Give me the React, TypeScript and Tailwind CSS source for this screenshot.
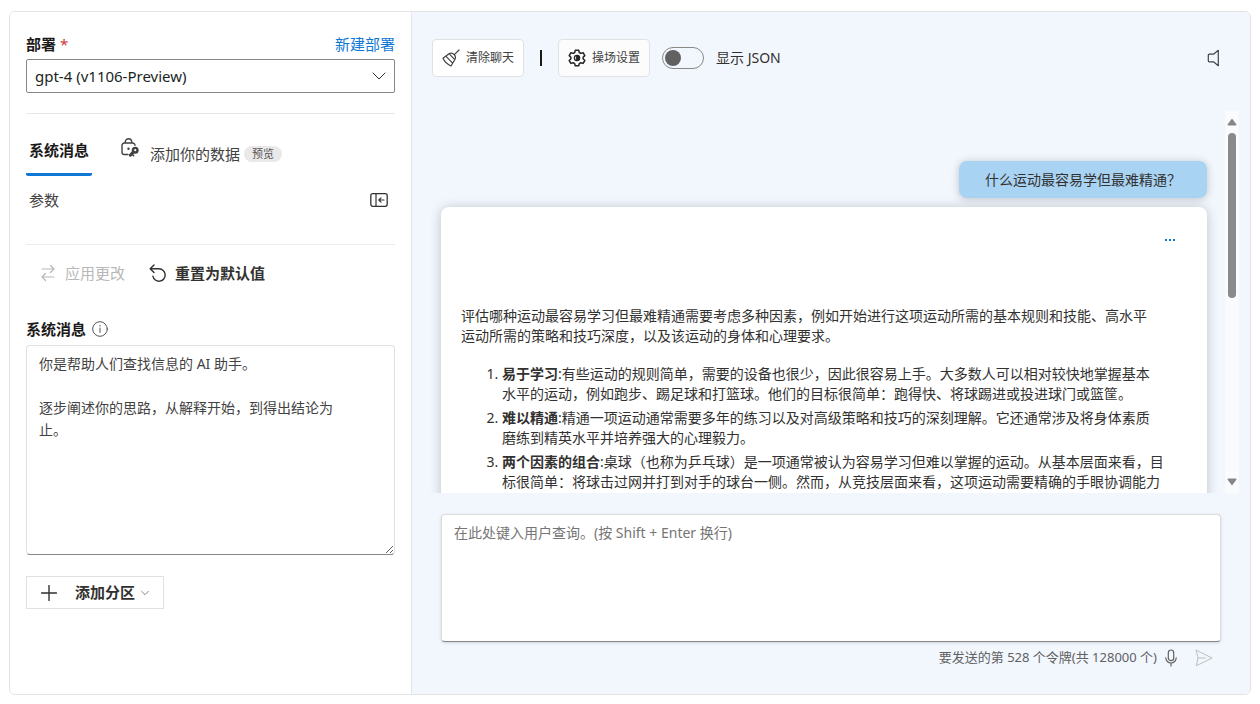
import { useState } from "react";
import type { ReactNode } from "react";

interface IconProps {
  className?: string;
}

interface Answer {
  title: string;
  lines: string[];
}

const answers: Answer[] = [
  {
    title: "易于学习",
    lines: [
      "有些运动的规则简单，需要的设备也很少，因此很容易上手。大多数人可以相对较快地掌握基本",
      "水平的运动，例如跑步、踢足球和打篮球。他们的目标很简单：跑得快、将球踢进或投进球门或篮筐。",
    ],
  },
  {
    title: "难以精通",
    lines: [
      "精通一项运动通常需要多年的练习以及对高级策略和技巧的深刻理解。它还通常涉及将身体素质",
      "磨练到精英水平并培养强大的心理毅力。",
    ],
  },
  {
    title: "两个因素的组合",
    lines: [
      "桌球（也称为乒乓球）是一项通常被认为容易学习但难以掌握的运动。从基本层面来看，目",
      "标很简单：将球击过网并打到对手的球台一侧。然而，从竞技层面来看，这项运动需要精确的手眼协调能力",
    ],
  },
];

function Icon({
  className,
  box = "0 0 20 20",
  children,
}: IconProps & { box?: string; children: ReactNode }) {
  return (
    <svg
      viewBox={box}
      fill="none"
      stroke="currentColor"
      strokeLinecap="round"
      strokeLinejoin="round"
      className={className}
      aria-hidden="true"
    >
      {children}
    </svg>
  );
}

function ChevronIcon({ className }: IconProps) {
  return (
    <Icon box="0 0 14 8" className={className}>
      <path d="M1 1l6 6 6-6" />
    </Icon>
  );
}

function LockKeyIcon({ className }: IconProps) {
  return (
    <Icon className={className}>
      <path
        strokeWidth="1.4"
        d="M8 16.500H4.300a2.300 2.300 0 0 1-2.300-2.300V7.300A2.300 2.300 0 0 1 4.300 5h8.400A2.300 2.300 0 0 1 15 7.300M5.300 4.800V4a3.200 3.200 0 0 1 6.400 0v.8"
      />
      <circle cx="8.500" cy="10.800" r="1.200" fill="currentColor" stroke="none" />
      <circle cx="15.200" cy="12.200" r="2.300" strokeWidth="2.400" />
      <path strokeWidth="3" d="M13 14.400L10.300 17.200" />
      <path strokeWidth="1.600" d="M12.300 16.500l1.300 1.200" />
    </Icon>
  );
}

function PanelIcon({ className }: IconProps) {
  return (
    <Icon box="0 0 18 14" className={className}>
      <rect x="0.8" y="0.7" width="16.4" height="12.6" rx="2" strokeWidth="1.3" />
      <path strokeWidth="1.2" d="M6 1v12M14 7H9M11 4.8L8.8 7 11 9.2" />
    </Icon>
  );
}

function SwapIcon({ className }: IconProps) {
  return (
    <Icon box="0 0 14 18" className={className}>
      <path strokeWidth="1.2" d="M1 5h12M9.500 1.500L13 5 9.500 8.500M13 13H1M4.500 9.500L1 13 4.500 16.500" />
    </Icon>
  );
}

function ResetIcon({ className }: IconProps) {
  return (
    <Icon box="0 0 18 18" className={className}>
      <path strokeWidth="1.4" d="M5 1L1.200 4.800 5 8.600M1.500 4.800H10a6.200 6.200 0 1 1-6.100 7.400" />
    </Icon>
  );
}

function InfoIcon({ className }: IconProps) {
  return (
    <Icon box="0 0 16 16" className={className}>
      <circle cx="8" cy="8" r="7.3" />
      <path d="M8 7v4.500" />
      <circle cx="8" cy="4.700" r="0.7" fill="currentColor" stroke="none" />
    </Icon>
  );
}

function BroomIcon({ className }: IconProps) {
  return (
    <Icon box="0 0 18 18" className={className}>
      <path
        strokeWidth="1.2"
        d="M17 1l-4.600 4.600M7 4.700c1.800-.9 3.700-.6 5 .8 1.500 1.400 1.800 3.400.8 5.200L9 17C5.600 15.600 2.500 12.700 1 9.300zM7 4.700l5.800 6M3.800 7.200l6.800 7"
      />
    </Icon>
  );
}

function GearIcon({ className }: IconProps) {
  return (
    <Icon box="0 0 18 18" className={className}>
      <path
        strokeWidth="1.5"
        d="M7.300 1.200h3.400l.6 2.300 1.500.9 2.300-.7 1.700 2.900-1.700 1.700v1.500l1.700 1.700-1.700 2.900-2.300-.7-1.500.9-.6 2.200H7.300l-.6-2.200-1.500-.9-2.300.7-1.700-2.900 1.700-1.700V8.300L1.200 6.600l1.700-2.900 2.300.7 1.500-.9z"
      />
      <circle cx="9" cy="9" r="2.6" strokeWidth="1.3" />
      <path d="M9 6.600a2.400 2.400 0 0 1 0 4.800z" fill="currentColor" />
    </Icon>
  );
}

function SpeakerIcon({ className }: IconProps) {
  return (
    <Icon box="0 0 13 18" className={className}>
      <path strokeWidth="1.2" d="M11.300 1.300v15.400L6.500 12.800H2.300a1 1 0 0 1-1-1V6.200a1 1 0 0 1 1-1h4.200z" />
    </Icon>
  );
}

function MicIcon({ className }: IconProps) {
  return (
    <Icon box="0 0 12 18" className={className}>
      <rect x="3.3" y="1" width="5.4" height="10.6" rx="2.7" strokeWidth="1.2" />
      <path strokeWidth="1.2" d="M.8 8.800a5.200 5.200 0 0 0 10.400 0M6 14.200V17" />
    </Icon>
  );
}

function SendIcon({ className }: IconProps) {
  return (
    <Icon box="0 0 18 18" className={className}>
      <path d="M1.300 1.200L17 9 1.300 16.800 3 9zM3 9h7.500" />
    </Icon>
  );
}

function PlusIcon({ className }: IconProps) {
  return (
    <Icon box="0 0 16 16" className={className}>
      <path strokeWidth="1.4" d="M8 .5v15M.5 8h15" />
    </Icon>
  );
}

function SetupPanel() {
  const [message, setMessage] = useState(
    "你是帮助人们查找信息的 AI 助手。\n\n逐步阐述你的思路，从解释开始，到得出结论为止。"
  );

  return (
    <aside className="w-[402px] shrink-0 border-r border-[#e3e6ea] bg-white px-4 pt-5 pb-6">
      <div className="flex h-6 items-center justify-between">
        <label htmlFor="deployment" className="text-[15px] font-bold text-[#1b1a19]">
          部署 <span className="font-normal text-[#d13438]">*</span>
        </label>
        <a href="#new" className="text-[15px] text-[#0f78d4]">
          新建部署
        </a>
      </div>
      <div className="relative mt-[3px]">
        <select
          id="deployment"
          className="h-[34px] w-full appearance-none rounded-xs border border-[#8a8886] bg-white px-2 text-[15px] text-[#201f1e]"
        >
          <option>gpt-4 (v1106-Preview)</option>
        </select>
        <ChevronIcon className="pointer-events-none absolute top-[13px] right-[9px] h-2 w-3.5 text-[#323130]" />
      </div>

      <hr className="mt-5 border-[#e8e8e8]" />

      <div role="tablist" className="flex h-[62px] items-end">
        <button
          role="tab"
          aria-selected="true"
          className="h-11 rounded-xs border-b-3 border-[#0f78d4] px-[3px] pb-1 text-[15px] font-bold text-[#1b1a19]"
        >
          系统消息
        </button>
        <button
          role="tab"
          aria-selected="false"
          className="ml-7 flex h-11 items-center text-[15px] text-[#424242]"
        >
          <LockKeyIcon className="mb-3 size-5" />
          <span className="ml-2.5">添加你的数据</span>
          <span className="ml-1 rounded-full bg-[#e9e9e9] px-2 text-[11px] leading-4 text-[#555]">
            预览
          </span>
        </button>
      </div>
      <div className="flex h-12 items-center justify-between pr-[7px] pl-[3px]">
        <button role="tab" className="text-[15px] text-[#424242]">
          参数
        </button>
        <button aria-label="折叠面板" className="text-[#323130]">
          <PanelIcon className="h-3.5 w-[18px]" />
        </button>
      </div>

      <hr className="mt-5 border-[#ededed]" />

      <div className="flex h-14 items-center gap-6 pl-[15px]">
        <button disabled className="flex items-center gap-2.5 text-[15px] text-[#b8b8b8]">
          <SwapIcon className="h-[18px] w-3.5" />
          应用更改
        </button>
        <button className="flex items-center gap-2 text-[15px] font-bold text-[#323130]">
          <ResetIcon className="size-[18px]" />
          重置为默认值
        </button>
      </div>

      <div className="mt-3 flex h-8 items-center gap-1.5">
        <label htmlFor="system-message" className="text-[15px] font-bold text-[#1b1a19]">
          系统消息
        </label>
        <InfoIcon className="size-4 text-[#555]" />
      </div>
      <textarea
        id="system-message"
        value={message}
        onChange={(e) => setMessage(e.target.value)}
        className="block h-[210px] w-full rounded-sm border border-[#e1e1e1] border-b-[#8a8886] bg-white pt-[7px] pr-10 pl-3 text-sm leading-[22px] text-[#424242]"
      />
      <button className="mt-[21px] flex h-[33px] items-center border border-[#e1e1e1] px-3.5 text-[#323130]">
        <PlusIcon className="size-4" />
        <span className="ml-[18px] text-[15px] font-bold">添加分区</span>
        <ChevronIcon className="ml-1.5 h-1.5 w-2" />
      </button>
    </aside>
  );
}

function Toolbar() {
  return (
    <div className="flex items-center pr-[30px] pl-5">
      <button className="flex h-[38px] items-center gap-1.5 rounded-sm border border-[#e1e1e1] bg-white px-[9px] text-xs text-[#424242]">
        <BroomIcon className="size-[18px]" />
        清除聊天
      </button>
      <span className="mx-4 h-4 w-0.5 bg-[#1b1a19]" />
      <button className="flex h-[38px] items-center gap-1.5 rounded-sm border border-[#e1e1e1] bg-[#fcfcfc] px-[9px] text-xs text-[#424242]">
        <GearIcon className="size-[18px] text-[#242424]" />
        操场设置
      </button>
      <input
        id="show-json"
        type="checkbox"
        role="switch"
        className="ml-3 flex h-[22px] w-[42px] appearance-none items-center rounded-full border border-[#8a8886] px-0.5 before:size-4 before:rounded-full before:bg-[#616161] checked:justify-end"
      />
      <label htmlFor="show-json" className="ml-3 text-sm text-[#323130]">
        显示 JSON
      </label>
      <button aria-label="朗读" className="ml-auto text-[#424242]">
        <SpeakerIcon className="h-[18px] w-[13px]" />
      </button>
    </div>
  );
}

function ScrollTrack() {
  return (
    <div className="flex w-3.5 flex-col items-center bg-[#fafbfc] py-[7px]" aria-hidden="true">
      <svg viewBox="0 0 10 8" className="h-2 w-2.5 fill-[#858585]">
        <path d="M5 .5L9.500 6.500Q9.500 7.500 8.500 7.500h-7Q.5 7.500.5 6.500z" />
      </svg>
      <div className="mt-[7px] h-[165px] w-2 rounded-full bg-[#8a8a8a]" />
      <svg viewBox="0 0 10 8" className="mt-auto h-2 w-2.5 fill-[#858585]">
        <path d="M5 7.500L.5 1.500Q.5.5 1.500.5h7Q9.500.5 9.500 1.500z" />
      </svg>
    </div>
  );
}

function Conversation() {
  return (
    <div className="mt-[34px] flex h-[382px] pr-[11px] pl-3">
      <div className="min-w-0 flex-1 overflow-hidden pt-[50px] pr-[18px] pl-[17px] text-sm leading-5 text-[#323130]">
        <div className="ml-auto flex h-[37px] w-[248px] items-center justify-center rounded-lg bg-[#a9d3f3] shadow-[0_1px_8px_rgba(0,0,0,0.22)]">
          什么运动最容易学但最难精通？
        </div>
        <article className="mt-[9px] rounded-lg bg-white px-5 pt-[23px] pb-6 shadow-[0_1px_12px_rgba(0,0,0,0.22)]">
          <button
            aria-label="更多"
            className="mr-3 ml-auto flex h-5 items-center gap-0.5"
          >
            <span className="size-0.5 bg-[#0f78d4]" />
            <span className="size-0.5 bg-[#0f78d4]" />
            <span className="size-0.5 bg-[#0f78d4]" />
          </button>
          <p className="mt-14">
            评估哪种运动最容易学习但最难精通需要考虑多种因素，例如开始进行这项运动所需的基本规则和技能、高水平
            <br />
            运动所需的策略和技巧深度，以及该运动的身体和心理要求。
          </p>
          <ol className="mt-[18px] list-decimal space-y-1 pl-[41px]">
            {answers.map((answer) => (
              <li key={answer.title}>
                <strong>{answer.title}</strong>:{answer.lines[0]}
                <br />
                {answer.lines[1]}
              </li>
            ))}
          </ol>
        </article>
      </div>
      <ScrollTrack />
    </div>
  );
}

function Composer() {
  return (
    <div className="mt-[21px] px-[29px]">
      <textarea
        aria-label="用户查询"
        placeholder="在此处键入用户查询。(按 Shift + Enter 换行)"
        className="block h-32 w-full resize-none rounded-sm border border-[#dcdcdc] border-b-[#8a8886] bg-white px-3 py-[7px] text-sm leading-[22px] text-[#323130] shadow-[0_1px_3px_rgba(0,0,0,0.15)] placeholder:text-[#757575]"
      />
      <div className="flex h-8 items-center justify-end pr-2 text-[13px] text-[#616161]">
        <span>要发送的第 528 个令牌(共 128000 个)</span>
        <button aria-label="语音输入" className="ml-2">
          <MicIcon className="h-[18px] w-3" />
        </button>
        <button aria-label="发送" disabled className="ml-[18px] text-[#bdbdbd]">
          <SendIcon className="size-[18px]" />
        </button>
      </div>
    </div>
  );
}

export default function App() {
  return (
    <main className="flex min-h-screen bg-white px-[9px] pt-[11px] pb-[9px] font-['Noto_Sans','Noto_Sans_CJK_SC',sans-serif]">
      <div className="flex flex-1 overflow-hidden rounded-md border border-[#e3e3e3]">
        <SetupPanel />
        <section className="min-w-0 flex-1 bg-[#f2f7fe] pt-[27px] pb-5">
          <Toolbar />
          <Conversation />
          <Composer />
        </section>
      </div>
    </main>
  );
}
